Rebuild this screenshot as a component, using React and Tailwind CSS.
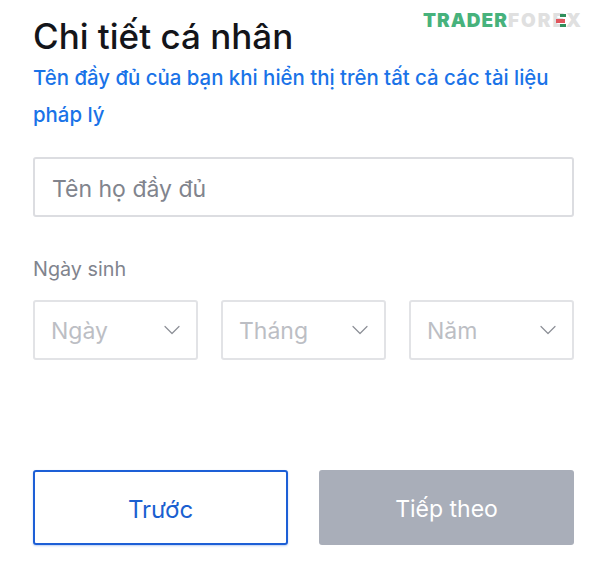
import React from "react";
import { ChevronDown } from "lucide-react";

const DateSelect = ({ label }) => (
  <div className="flex h-[60px] w-[165px] items-center justify-between rounded-[3px] border-2 border-[#e2e3e6] pl-[16px] pr-[10px]">
    <span className="pt-[2px] text-[23px] leading-none text-[#bcbec4]">{label}</span>
    <ChevronDown size={28} strokeWidth={1.05} className="text-[#8c8f97]" />
  </div>
);

const App = () => {
  return (
    <div className="relative h-[568px] w-[600px] bg-white pl-[33px] pr-[26px] font-['Inter','Liberation_Sans',sans-serif]">
      {/* Watermark */}
      <div className="absolute left-[423px] top-[9px] flex items-center font-['Inter',sans-serif] text-[19px] font-black leading-[24px] tracking-[1px]">
        <span className="text-[#47b27c]">TRADER</span>
        <span className="tracking-[2px] text-[#e0e0e0]">FOREX</span>
        <svg width="12" height="14" viewBox="0 0 12 14" className="absolute left-[132px] top-[5px]">
          <rect x="5" y="0" width="6" height="3" fill="#2f8f5b" />
          <rect x="1" y="5" width="9" height="4" fill="#e0555c" />
          <rect x="5" y="10" width="6" height="3" fill="#2f8f5b" />
        </svg>
      </div>

      <h1 className="pt-[15px] text-[35px] font-medium leading-[42px] text-[#14151a]">
        Chi tiết cá nhân
      </h1>
      <p className="mt-[2px] w-[530px] text-[20.4px] font-medium leading-[37px] text-[#1a73e8]">
        Tên đầy đủ của bạn khi hiển thị trên tất cả các tài liệu pháp lý
      </p>

      <div className="mt-[24px] flex h-[60px] items-center rounded-[3px] border-2 border-[#dcdde1] pl-[17px]">
        <span className="pt-[4px] text-[23px] leading-none text-[#81848d]">Tên họ đầy đủ</span>
      </div>

      <div className="mt-[40px] text-[19.8px] leading-[24px] text-[#81848d]">Ngày sinh</div>

      <div className="mt-[19px] flex justify-between">
        <DateSelect label="Ngày" />
        <DateSelect label="Tháng" />
        <DateSelect label="Năm" />
      </div>

      <div className="mt-[110px] flex justify-between">
        <button className="h-[75px] w-[255px] rounded-[3px] border-2 border-[#1d5fd6] pt-[4px] text-[24px] text-[#1a5fd0] shadow-[0_1px_2px_rgba(29,95,214,0.3)]">
          Trước
        </button>
        <button className="h-[75px] w-[255px] rounded-[3px] bg-[#a9aeb9] pt-[4px] text-[23px] text-white">
          Tiếp theo
        </button>
      </div>
    </div>
  );
};

export default App;
